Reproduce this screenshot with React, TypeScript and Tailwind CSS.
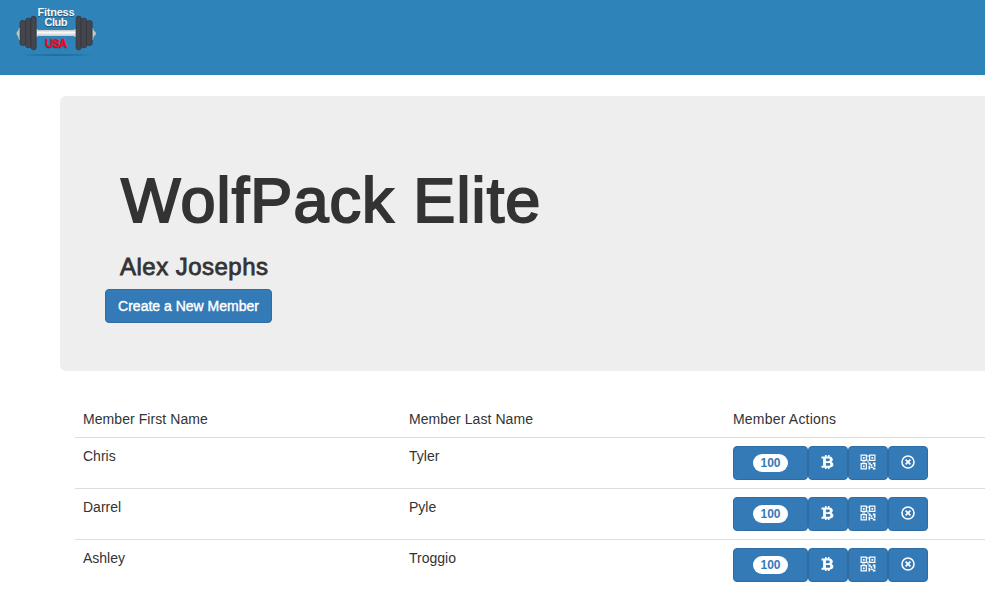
const members = [
  { first: "Chris", last: "Tyler", points: 100 },
  { first: "Darrel", last: "Pyle", points: 100 },
  { first: "Ashley", last: "Troggio", points: 100 },
];

function Logo() {
  return (
    <svg width="80" height="56" viewBox="0 0 80 56" fontFamily="'Liberation Sans', Arial, sans-serif" fontWeight="bold">
      <defs>
        <linearGradient id="bar" x1="0" y1="0" x2="0" y2="1">
          <stop offset="0" stopColor="#bfc5c6" />
          <stop offset=".4" stopColor="#fafafa" />
          <stop offset="1" stopColor="#c5c9ca" />
        </linearGradient>
        <radialGradient id="shade">
          <stop offset="0" stopColor="#17587f" stopOpacity=".75" />
          <stop offset="1" stopColor="#17587f" stopOpacity="0" />
        </radialGradient>
      </defs>
      <ellipse cx="41" cy="51" rx="40" ry="1.500" fill="url(#shade)" />
      <path d="M5 24H3L2 27 .7 28v3L2 32l1 4h2zM75 24h2l1 3 1.700 1v3L78 32l-1 4h-2z" fill="#c3c7c9" />
      <rect x="19" y="25" width="3" height="8" rx="1" fill="#b5babb" />
      <rect x="58" y="25" width="3" height="8" rx="1" fill="#b5babb" />
      <rect x="21" y="26" width="38.500" height="6" fill="url(#bar)" />
      <g fill="#45464d" stroke="#2d2f36" strokeWidth=".6">
        <rect x="4" y="16.500" width="5.800" height="25" rx="2.300" />
        <rect x="9.600" y="14.200" width="5.600" height="29.500" rx="2.300" />
        <rect x="15" y="12.300" width="5.200" height="33.500" rx="2.200" />
        <rect x="60.100" y="12.300" width="5.200" height="33.500" rx="2.200" />
        <rect x="65.100" y="14.200" width="5.600" height="29.500" rx="2.300" />
        <rect x="70.500" y="16.500" width="5.700" height="25" rx="2.300" />
      </g>
      <g textAnchor="middle" fontSize="11" className="[text-shadow:0_1px_1px_rgba(0,0,0,0.4)]">
        <text x="40" y="11.500" fill="#f4f8fa" textLength="37">Fitness</text>
        <text x="40" y="22" fill="#f4f8fa" textLength="23">Club</text>
        <text x="40" y="42.500" fill="#ff0d25" stroke="#ff0d25" strokeWidth=".3" textLength="22">USA</text>
      </g>
    </svg>
  );
}

function BitcoinIcon() {
  return (
    <svg width="13" height="16" viewBox="0 0 13 16" fill="white">
      <path fillRule="evenodd" d="M.5 2.500H4V1h1.600v1.500h1.300V1h1.600v1.600c2.200.300 3.300 1.400 3.300 3 0 1.100-.5 1.900-1.400 2.300 1.300.5 2 1.400 2 2.700 0 1.900-1.400 3-3.900 3.100V15H6.900v-1.300H5.600V15H4v-1.300H.5v-1.900h1.600V4.400H.5zM4.900 4.500v2.700h2.200c1.200 0 1.800-.500 1.800-1.400S8.300 4.500 7.100 4.500zM4.900 9v2.800h2.500c1.300 0 2-.5 2-1.400S8.700 9 7.400 9z" />
    </svg>
  );
}

function QrIcon() {
  return (
    <svg width="16" height="16" viewBox="0 0 15 15" fill="white">
      <path fillRule="evenodd" d="M.5.500h6v6h-6zM1.600 1.600v3.800h3.800V1.600zM8.500.500h6v6h-6zM9.600 1.600v3.800h3.800V1.600zM.5 8.500h6v6h-6zM1.600 9.600v3.800h3.800V9.600z" />
      <path d="M2.700 2.700h1.700v1.700H2.700zM10.700 2.700h1.700v1.700h-1.700zM2.700 10.700h1.700v1.700H2.700zM7 1h1v2H7zM7 5h1v3H7zM2 7h3v1H2zM8 8h2v2H8zM10 9.500h1.500v2H10zM12 8h2.500v1.500H12zM13 9h1.500v3H13zM8 11h1.500v3.500H8zM10 12h2.500v1.200H10zM12 13h2.500v1.500H12z" />
    </svg>
  );
}

function RemoveIcon() {
  return (
    <svg width="14" height="14" viewBox="0 0 14 14" fill="none" stroke="white">
      <circle cx="7" cy="7" r="6" strokeWidth="1.600" />
      <path d="m4.600 4.600 4.800 4.800m0-4.800L4.600 9.400" strokeWidth="1.700" />
    </svg>
  );
}

const actionButton =
  "flex h-[34px] items-center justify-center rounded border border-[#2e6da4] bg-[#337ab7] text-white";
const iconButton = `${actionButton} w-10 pb-[2px] pr-px`;

export default function App() {
  return (
    <div className="h-[598px] w-full overflow-hidden bg-white font-['Liberation_Sans',Arial,sans-serif] text-[14px] leading-5 text-[#333]">
      <header className="h-[75px] bg-[#2e83b8] pl-4 pt-[4px]">
        <Logo />
      </header>
      <main className="ml-[60px] mt-[21px] w-[1140px]">
        <section className="h-[275px] rounded-md bg-[#eee] pl-[45px] pt-[70px]">
          <h1 className="w-max pl-[16px] text-[63px] leading-[69px] tracking-[1.100px] [-webkit-text-stroke:2px_#333]">WolfPack Elite</h1>
          <h3 className="mt-[19px] w-max pl-[15px] text-[24px] leading-[26px] tracking-[0.480px] [-webkit-text-stroke:0.800px_#333]">Alex Josephs</h3>
          <button className="mt-[9px] flex h-[34px] w-[167px] items-center justify-center whitespace-nowrap rounded border border-[#2e6da4] bg-[#337ab7] text-white [-webkit-text-stroke:0.400px_white]">
            Create a New Member
          </button>
        </section>
        <div className="ml-[15px] mt-[30px]">
          <div className="grid h-9 grid-cols-[326px_324px_1fr] px-2 pt-2 tracking-[0.070px]">
            <span>Member First Name</span>
            <span>Member Last Name</span>
            <span className="tracking-[0.200px]">Member Actions</span>
          </div>
          {members.map((m) => (
            <div key={m.first} className="grid h-[51px] grid-cols-[326px_324px_1fr] border-t border-[#ddd] px-2 pt-2">
              <span>{m.first}</span>
              <span>{m.last}</span>
              <div className="flex">
                <button className={`${actionButton} w-[75px]`}>
                  <span className="flex h-[18px] w-[35px] items-center justify-center rounded-full bg-white text-[12px] font-bold leading-none text-[#337ab7]">
                    {m.points}
                  </span>
                </button>
                <button className={iconButton}><BitcoinIcon /></button>
                <button className={iconButton}><QrIcon /></button>
                <button className={iconButton}><RemoveIcon /></button>
              </div>
            </div>
          ))}
        </div>
      </main>
    </div>
  );
}
